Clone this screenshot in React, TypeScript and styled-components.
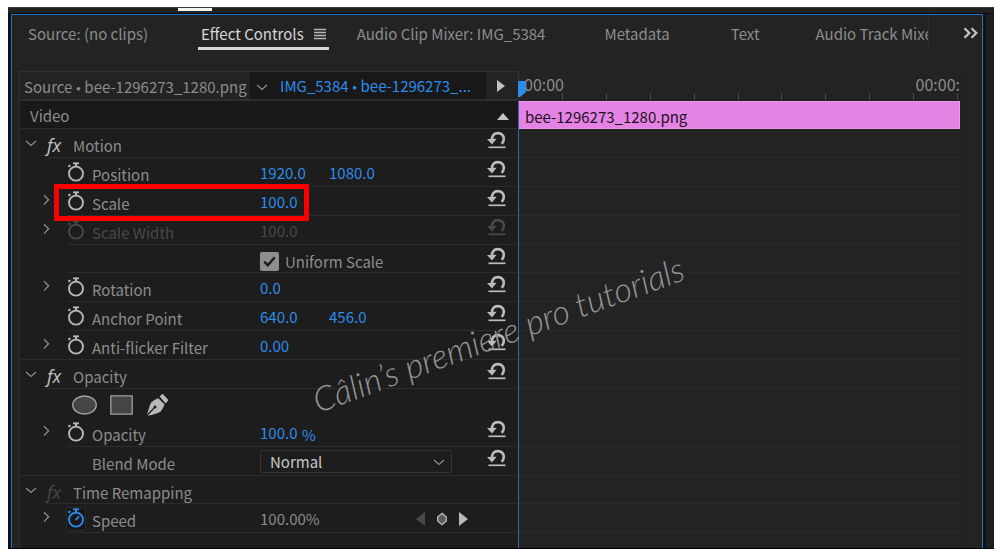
import React from "react";
import styled, { createGlobalStyle } from "styled-components";

const GlobalStyle = createGlobalStyle`
  *, *::before, *::after { box-sizing: border-box; }
  body {
    margin: 0;
    background: #ffffff;
    font-family: "Noto Sans CJK SC", "Noto Sans", sans-serif;
    font-size: 15px;
    line-height: 20px;
    color: #8c8c8c;
  }
  button, input, select {
    font: inherit;
    color: inherit;
    background: none;
    border: 0;
    padding: 0;
    margin: 0;
  }
  button { cursor: pointer; }
  svg { display: block; flex: none; }
`;

const Page = styled.div`
  padding: 7px 6px 5px 8px;
`;

const Workspace = styled.main`
  position: relative;
  padding: 0 11px 0 3px;
  background: linear-gradient(to left, #1e1e1e 8px, #121212 8px);
  border-top: 1px solid #3a3a3a;
  border-bottom: 1px solid #000000;
`;

const TopStrip = styled.div`
  display: flex;
  height: 6px;
  margin: 0 -11px 0 -3px;
  padding-left: 170px;
  background: #212121;
  border-bottom: 1px solid #0c0c0c;
`;

const StripMarker = styled.span`
  width: 34px;
  height: 3px;
  background: #f4f4f4;
`;

const Panel = styled.section`
  border: 1px solid #1d74c8;
  border-width: 1px 1px 0;
  background: #232323;
`;

const TabBar = styled.div`
  display: flex;
  align-items: flex-start;
  height: 56px;
  padding: 0 4px 0 13px;
`;

const TabList = styled.div`
  display: flex;
  flex: 1;
  min-width: 0;
  overflow: hidden;
  margin-right: 34px;
  border-right: 1px solid #2e2e2e;
`;

const Tab = styled.button<{ $active?: boolean; $after: number }>`
  display: flex;
  align-items: center;
  flex: none;
  gap: 10px;
  height: 35px;
  margin-right: ${(p) => p.$after}px;
  padding: 6px 3px 0;
  white-space: nowrap;
  color: ${(p) => (p.$active ? "#d6d6d6" : "#8c8c8c")};
  border-bottom: 3px solid ${(p) => (p.$active ? "#d6d6d6" : "transparent")};
`;

const MoreTabs = styled.button`
  padding-top: 12px;
  color: #c4c4c4;
`;

const Columns = styled.div`
  display: grid;
  grid-template-columns: minmax(0, 499fr) minmax(0, 443fr);
  padding: 0 21px 0 7px;
`;

const Properties = styled.div`
  border-left: 1px solid #2f2f2f;
  background: #1d1d1d;
`;

const ClipHeader = styled.div`
  display: flex;
  height: 30px;
  border-top: 1px solid #303030;
  border-bottom: 2px solid #2e2e2e;
`;

const SourceName = styled.div`
  flex: none;
  width: 230px;
  padding: 5px 0 0 4px;
  background: #232323;
  white-space: nowrap;
`;

const Bullet = styled.span`
  font-family: Lato, sans-serif;
  font-size: 9px;
  vertical-align: 1px;
`;

const SequenceButton = styled.button`
  display: flex;
  flex: 1;
  min-width: 0;
  align-items: center;
  gap: 12px;
  padding: 3px 0 0 6px;
  background: #181818;
  color: #2d8ceb;
  white-space: nowrap;
`;

const PlayButton = styled.button`
  width: 32px;
  padding-left: 11px;
  background: #232323;
  color: #c0c0c0;
`;

const VideoHeader = styled.div`
  display: flex;
  justify-content: space-between;
  align-items: center;
  height: 28px;
  padding: 3px 9px 0 10px;
  background: #191919;
  border-bottom: 1px solid #2c2c2c;
`;

const Row = styled.div<{ $h: number }>`
  position: relative;
  display: flex;
  height: ${(p) => p.$h}px;
  margin-right: 2px;
`;

const Twirl = styled.div<{ $header?: boolean; $line?: boolean }>`
  flex: none;
  width: ${(p) => (p.$header ? 27 : 47)}px;
  padding: ${(p) => (p.$header ? "11px 0 0 5px" : "7px 0 0 23px")};
  border-bottom: 1px solid ${(p) => (p.$line ? "#2c2c2c" : "transparent")};
  color: #8c8c8c;
`;

const RowBody = styled.div<{ $line?: boolean }>`
  display: flex;
  flex: 1;
  min-width: 0;
  border-bottom: 1px solid ${(p) => (p.$line ? "#2c2c2c" : "transparent")};
`;

const Fx = styled.span<{ $off?: boolean }>`
  width: 26px;
  padding-top: 6px;
  font-family: "Open Sans", sans-serif;
  font-style: italic;
  font-size: 18px;
  color: ${(p) => (p.$off ? "#484848" : "#c4c4c4")};
`;

const WatchButton = styled.button<{ $tone: "on" | "off" | "dim" }>`
  flex: none;
  display: flex;
  justify-content: center;
  width: 18px;
  height: 22px;
  margin: 4px 7px 0 0;
  border-radius: 2px;
  ${(p) => p.$tone === "on" && "background: #171717; box-shadow: 0 0 0 1px #2a2a2a;"}
  color: ${(p) => ({ on: "#2d8ceb", off: "#b8b8b8", dim: "#484848" })[p.$tone]};
`;

const WatchSpacer = styled.span`
  flex: none;
  width: 25px;
`;

const Label = styled.label<{ $dim?: boolean }>`
  flex: none;
  width: 168px;
  padding-top: 7px;
  white-space: nowrap;
  color: ${(p) => (p.$dim ? "#484848" : "#8c8c8c")};
`;

const LabelSpacer = styled.span`
  flex: none;
  width: 168px;
`;

const GroupLabel = styled.span`
  flex: 1;
  padding-top: 7px;
`;

const Values = styled.div`
  display: flex;
  flex: 1;
  min-width: 0;
  padding-top: 5px;
`;

const NumberField = styled.input<{ $w: number }>`
  width: ${(p) => p.$w}px;
  height: 20px;
  color: #2d8ceb;
  &:disabled { color: #484848; }
`;

const Unit = styled.span`
  color: #2d8ceb;
  padding-top: 2px;
`;

const ResetButton = styled.button`
  flex: none;
  display: flex;
  width: 29px;
  padding-top: 1px;
  color: #bcbcbc;
  &:disabled { color: #484848; }
`;

const CheckLabel = styled.label`
  display: flex;
  align-items: flex-start;
  gap: 6px;
  padding-top: 2px;
`;

const CheckWrap = styled.span`
  display: grid;
  > * { grid-area: 1 / 1; }
  > svg { pointer-events: none; margin: 4px 0 0 3px; }
`;

const Checkbox = styled.input`
  appearance: none;
  width: 19px;
  height: 19px;
  border-radius: 2px;
  &:checked { background: #8e8e8e; }
`;

const MaskTools = styled.div`
  display: flex;
  gap: 13px;
  padding: 3px 0 0 5px;
`;

const SelectWrap = styled.span`
  display: grid;
  flex: none;
  width: 192px;
  height: 23px;
  margin-top: -2px;
  > * { grid-area: 1 / 1; }
  > svg { pointer-events: none; justify-self: end; margin: 9px 7px 0 0; }
`;

const Select = styled.select`
  appearance: none;
  padding: 0 24px 0 9px;
  border: 1px solid #333333;
  border-radius: 2px;
  color: #c8c8c8;
`;

const KeyframeNav = styled.div`
  display: flex;
  align-items: center;
  gap: 9px;
  margin-left: auto;
  padding: 0 48px 0 0;
  height: 20px;
  button { color: #b8b8b8; }
  button:disabled { color: #484848; }
`;

const Highlight = styled.div`
  position: absolute;
  left: 34px;
  top: -3px;
  width: 255px;
  height: 37px;
  border: 5px solid #fb0000;
  pointer-events: none;
`;

const BottomSpace = styled.div`
  height: 15px;
`;

const Timeline = styled.div`
  position: relative;
  display: flex;
  flex-direction: column;
  border-right: 1px solid #1f1f1f;
`;

const Ruler = styled.div`
  display: flex;
  flex-direction: column;
  height: 30px;
  border-left: 1px solid #333333;
`;

const Times = styled.div`
  display: flex;
  justify-content: space-between;
  height: 22px;
  padding: 3px 0 0 5px;
  font-size: 16px;
  white-space: nowrap;
`;

const Ticks = styled.div`
  display: flex;
  height: 7px;
  margin-right: 2px;
`;

const Tick = styled.span`
  flex: 1;
  border-right: 1px solid #4a4a4a;
`;

const Lanes = styled.div`
  flex: 1;
  border-left: 1px solid #2a6cb0;
`;

const Clip = styled.div`
  height: 28px;
  padding: 5px 0 0 6px;
  background: #e583e5;
  border: 1px solid #ee96ee;
  border-left: 0;
  color: #1c101c;
`;

const Lane = styled.div<{ $h: number; $line: boolean }>`
  height: ${(p) => p.$h}px;
  border-bottom: 1px solid ${(p) => (p.$line ? "#2a2a2a" : "transparent")};
`;

const Playhead = styled.svg`
  position: absolute;
  left: 0;
  top: 10px;
`;

const Watermark = styled.div`
  position: absolute;
  left: 312px;
  top: 374px;
  transform-origin: 0 100%;
  transform: rotate(-20deg);
  font-family: Lato, sans-serif;
  font-style: italic;
  font-weight: 300;
  font-size: 34px;
  line-height: 36px;
  color: #959595;
  white-space: nowrap;
  pointer-events: none;
`;

const ChevronDown = () => (
  <svg width="12" height="7" viewBox="0 0 12 7" fill="none" stroke="#8c8c8c" strokeWidth="1.3">
    <path d="M1 1l5 4.5L11 1" />
  </svg>
);

const ChevronRight = () => (
  <svg width="7" height="12" viewBox="0 0 7 12" fill="none" stroke="#8c8c8c" strokeWidth="1.3">
    <path d="M1 1.2l4.6 4.6L1 10.6" />
  </svg>
);

const ResetIcon = () => (
  <svg width="19" height="20" viewBox="0 0 19 20" fill="none">
    <path d="M4.9 10.2C4.8 5.600 7.200 3.100 10.900 3.100c3.500 0 5.900 2.500 5.900 5.600 0 2.300-.8 3.900-2.100 5.200" stroke="currentColor" strokeWidth="2.600" />
    <path d="M0 9L9.600 8.800 5 14.400z" fill="currentColor" />
    <path d="M1.500 17.300h17" stroke="currentColor" strokeWidth="1.700" />
  </svg>
);

const Stopwatch = ({ running }: { running?: boolean }) => (
  <svg width="18" height="20" viewBox="0 0 18 20" fill="none" stroke="currentColor">
    <circle cx="9" cy="11.6" r="7" strokeWidth="1.9" />
    <path d="M6 1.3h6" strokeWidth="1.8" />
    <path d="M9 1.5v3" strokeWidth="2.2" />
    <path d="M1.4 4.6l2-1.4" strokeWidth="2" />
    {running && <path d="M8.6 12.2l3.4-3.8" strokeWidth="1.8" />}
  </svg>
);

type Prop = {
  name: string;
  values: string[];
  twirl?: boolean;
  disabled?: boolean;
  unit?: string;
  highlight?: boolean;
  fullLine?: boolean;
};

const motion: Prop[] = [
  { name: "Position", values: ["1920.0", "1080.0"] },
  { name: "Scale", values: ["100.0"], twirl: true, highlight: true },
  { name: "Scale Width", values: ["100.0"], twirl: true, disabled: true },
];

const motionMore: Prop[] = [
  { name: "Rotation", values: ["0.0"], twirl: true },
  { name: "Anchor Point", values: ["640.0", "456.0"] },
  { name: "Anti-flicker Filter", values: ["0.00"], twirl: true, fullLine: true },
];

const Reset = ({ of, disabled }: { of: string; disabled?: boolean }) => (
  <ResetButton type="button" aria-label={`Reset ${of}`} disabled={disabled}>
    <ResetIcon />
  </ResetButton>
);

const GroupRow = ({ name, off, height = 29 }: { name: string; off?: boolean; height?: number }) => (
  <Row $h={height}>
    <Twirl $header>
      <ChevronDown />
    </Twirl>
    <RowBody $line>
      <Fx $off={off}>fx</Fx>
      <GroupLabel>{name}</GroupLabel>
      {!off && <Reset of={name} />}
    </RowBody>
  </Row>
);

const PropertyRow = ({ prop }: { prop: Prop }) => {
  const id = prop.name.replace(/\W/g, "-").toLowerCase();
  return (
    <Row $h={29}>
      <Twirl $line={prop.fullLine}>{prop.twirl && <ChevronRight />}</Twirl>
      <RowBody $line>
        <WatchButton type="button" aria-label={`Animate ${prop.name}`} $tone={prop.disabled ? "dim" : "off"}>
          <Stopwatch />
        </WatchButton>
        <Label htmlFor={id} $dim={prop.disabled}>
          {prop.name}
        </Label>
        <Values>
          {prop.values.map((v, i) => (
            <NumberField
              key={i}
              id={i === 0 ? id : undefined}
              aria-label={i === 0 ? undefined : `${prop.name} Y`}
              $w={prop.unit ? 42 : 69}
              defaultValue={v}
              disabled={prop.disabled}
            />
          ))}
          {prop.unit && <Unit>{prop.unit}</Unit>}
        </Values>
        <Reset of={prop.name} disabled={prop.disabled} />
      </RowBody>
      {prop.highlight && <Highlight />}
    </Row>
  );
};

const laneHeights = [29, 29, 29, 29, 28, 29, 29, 29, 29, 29, 29, 29, 28, 29];

export default function App() {
  return (
    <>
      <GlobalStyle />
      <Page>
        <Workspace>
          <TopStrip>
            <StripMarker />
          </TopStrip>
          <Panel>
            <TabBar>
              <TabList>
                <Tab $after={47}>Source: (no clips)</Tab>
                <Tab $active $after={25}>
                  Effect Controls
                  <svg width="12" height="12" viewBox="0 0 12 12" stroke="#b8b8b8" strokeWidth="1.4">
                    <path d="M0 1.5h12M0 4.5h12M0 7.5h12M0 10.5h12" />
                  </svg>
                </Tab>
                <Tab $after={53}>Audio Clip Mixer: IMG_5384</Tab>
                <Tab $after={55}>Metadata</Tab>
                <Tab $after={50}>Text</Tab>
                <Tab $after={0}>Audio Track Mixer</Tab>
              </TabList>
              <MoreTabs type="button" aria-label="More tabs">
                <svg width="15" height="12" viewBox="0 0 15 12" fill="none" stroke="currentColor" strokeWidth="2.3">
                  <path d="M1.5 1.2l4.8 4.8-4.8 4.8M8.5 1.2l4.8 4.8-4.8 4.8" />
                </svg>
              </MoreTabs>
            </TabBar>
            <Columns>
              <Properties>
                <ClipHeader>
                  <SourceName>
                    Source <Bullet>•</Bullet> bee-1296273_1280.png
                  </SourceName>
                  <SequenceButton type="button">
                    <ChevronDown />
                    <span>
                      IMG_5384 <Bullet>•</Bullet> bee-1296273_...
                    </span>
                  </SequenceButton>
                  <PlayButton type="button" aria-label="Show timeline">
                    <svg width="8" height="12" viewBox="0 0 8 12" fill="currentColor">
                      <path d="M0 0l8 6-8 6z" />
                    </svg>
                  </PlayButton>
                </ClipHeader>
                <VideoHeader>
                  <span>Video</span>
                  <svg width="12" height="7" viewBox="0 0 12 7" fill="#c4c4c4">
                    <path d="M0 7l6-7 6 7z" />
                  </svg>
                </VideoHeader>

                <GroupRow name="Motion" />
                {motion.map((p) => (
                  <PropertyRow key={p.name} prop={p} />
                ))}
                <Row $h={28}>
                  <Twirl />
                  <RowBody $line>
                    <WatchSpacer />
                    <LabelSpacer />
                    <Values>
                      <CheckLabel>
                        <CheckWrap>
                          <Checkbox type="checkbox" defaultChecked />
                          <svg width="13" height="11" viewBox="0 0 13 11" fill="none" stroke="#1c1c1c" strokeWidth="2.4">
                            <path d="M1.2 5.6l3.6 3.6 7-8" />
                          </svg>
                        </CheckWrap>
                        Uniform Scale
                      </CheckLabel>
                    </Values>
                    <Reset of="Uniform Scale" />
                  </RowBody>
                </Row>
                {motionMore.map((p) => (
                  <PropertyRow key={p.name} prop={p} />
                ))}

                <GroupRow name="Opacity" />
                <Row $h={29}>
                  <Twirl />
                  <RowBody>
                    <MaskTools>
                      <button type="button" aria-label="Ellipse mask">
                        <svg width="25" height="20" viewBox="0 0 25 20" fill="#454545" stroke="#a0a0a0" strokeWidth="1.3">
                          <ellipse cx="12.5" cy="10" rx="11.8" ry="9" />
                        </svg>
                      </button>
                      <button type="button" aria-label="Rectangle mask">
                        <svg width="23" height="20" viewBox="0 0 23 20" fill="#454545" stroke="#a0a0a0" strokeWidth="1.3">
                          <path d="M.8.8h21.4v18.4H.8z" />
                        </svg>
                      </button>
                      <button type="button" aria-label="Pen mask">
                        <svg width="23" height="23" viewBox="0 0 23 23" fill="#b8b8b8">
                          <path d="M13.6 3.4L16.5.8l6 6.3-2.8 3.3z" />
                          <path d="M12.3 5.2l6.2 6.3c-1.2 3.2-2.2 5-4 7.2C11 20.6 6.5 21.6 2.4 22.6L1 21.4C2.6 17.5 3 13.5 5 9.8 7.3 7.5 9.6 6.3 12.3 5.2z" />
                          <path d="M1.6 21.8L8.6 14.4" stroke="#1d1d1d" strokeWidth="1.3" />
                          <circle cx="9" cy="14" r="1.5" fill="#1d1d1d" />
                        </svg>
                      </button>
                    </MaskTools>
                  </RowBody>
                </Row>
                <PropertyRow prop={{ name: "Opacity", values: ["100.0"], twirl: true, unit: "%" }} />
                <Row $h={29}>
                  <Twirl $line />
                  <RowBody $line>
                    <WatchSpacer />
                    <Label htmlFor="blend-mode">Blend Mode</Label>
                    <Values>
                      <SelectWrap>
                        <Select id="blend-mode" defaultValue="Normal">
                          <option>Normal</option>
                          <option>Multiply</option>
                          <option>Screen</option>
                        </Select>
                        <ChevronDown />
                      </SelectWrap>
                    </Values>
                    <Reset of="Blend Mode" />
                  </RowBody>
                </Row>

                <GroupRow name="Time Remapping" off height={28} />
                <Row $h={29}>
                  <Twirl>
                    <ChevronRight />
                  </Twirl>
                  <RowBody $line>
                    <WatchButton type="button" aria-label="Animate Speed" $tone="on">
                      <Stopwatch running />
                    </WatchButton>
                    <Label as="span">Speed</Label>
                    <Values>
                      <span>100.00%</span>
                      <KeyframeNav>
                        <button type="button" aria-label="Previous keyframe" disabled>
                          <svg width="9" height="14" viewBox="0 0 9 14" fill="currentColor">
                            <path d="M9 0v14L0 7z" />
                          </svg>
                        </button>
                        <button type="button" aria-label="Add keyframe">
                          <svg width="16" height="14" viewBox="0 0 16 14" fill="#5a5a5a" stroke="currentColor" strokeWidth="1.4">
                            <path d="M8 1.3l4.3 3.7v4L8 12.7 3.7 9V5z" />
                          </svg>
                        </button>
                        <button type="button" aria-label="Next keyframe">
                          <svg width="9" height="14" viewBox="0 0 9 14" fill="currentColor">
                            <path d="M0 0v14l9-7z" />
                          </svg>
                        </button>
                      </KeyframeNav>
                    </Values>
                  </RowBody>
                </Row>
                <BottomSpace />
              </Properties>

              <Timeline>
                <Ruler>
                  <Times>
                    <span>00:00</span>
                    <span>00:00:</span>
                  </Times>
                  <Ticks>
                    {Array.from({ length: 10 }, (_, i) => (
                      <Tick key={i} />
                    ))}
                  </Ticks>
                </Ruler>
                <Lanes>
                  <Clip>bee-1296273_1280.png</Clip>
                  {laneHeights.map((h, i) => (
                    <Lane key={i} $h={h} $line={i !== 9} />
                  ))}
                </Lanes>
                <Playhead width="9" height="17" viewBox="0 0 9 17" fill="#2d8ceb">
                  <path d="M0 0h8v11l-6 5H0z" />
                </Playhead>
              </Timeline>
            </Columns>
          </Panel>
          <Watermark>Câlin’s premiere pro tutorials</Watermark>
        </Workspace>
      </Page>
    </>
  );
}
